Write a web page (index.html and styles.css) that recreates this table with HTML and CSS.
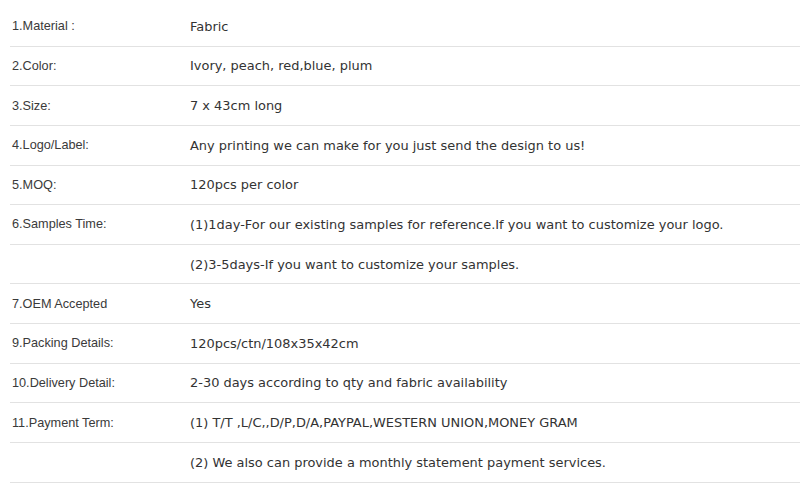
FILE: index.html
```html
<!DOCTYPE html>
<html>
<head>
<meta charset="utf-8">
<link rel="stylesheet" href="styles.css">
</head>
<body>
<div class="spec">
  <div class="row"><div class="label">1.Material :</div><div class="value">Fabric</div></div>
  <div class="row"><div class="label">2.Color:</div><div class="value">Ivory, peach, red,blue, plum</div></div>
  <div class="row"><div class="label">3.Size:</div><div class="value">7 x 43cm long</div></div>
  <div class="row"><div class="label">4.Logo/Label:</div><div class="value">Any printing we can make for you just send the design to us!</div></div>
  <div class="row"><div class="label">5.MOQ:</div><div class="value">120pcs per color</div></div>
  <div class="row"><div class="label">6.Samples Time:</div><div class="value">(1)1day-For our existing samples for reference.If you want to customize your logo.</div></div>
  <div class="row"><div class="label"></div><div class="value">(2)3-5days-If you want to customize your samples.</div></div>
  <div class="row"><div class="label">7.OEM Accepted</div><div class="value">Yes</div></div>
  <div class="row"><div class="label">9.Packing Details:</div><div class="value">120pcs/ctn/108x35x42cm</div></div>
  <div class="row"><div class="label">10.Delivery Detail:</div><div class="value">2-30 days according to qty and fabric availability</div></div>
  <div class="row"><div class="label">11.Payment Term:</div><div class="value">(1) T/T ,L/C,,D/P,D/A,PAYPAL,WESTERN UNION,MONEY GRAM</div></div>
  <div class="row"><div class="label"></div><div class="value">(2) We also can provide a monthly statement payment services.</div></div>
</div>
</body>
</html>
```
FILE: styles.css
```css
html, body {
  margin: 0;
  padding: 0;
  background: #ffffff;
}
.spec {
  padding: 7px 0 0 10px;
  display: flex;
  flex-direction: column;
}
.row {
  display: flex;
  align-items: center;
  height: 38.64px;
  border-bottom: 1px solid #e2e2e2;
}
.label {
  width: 178px;
  padding-left: 2px;
  font-family: "Liberation Sans", Arial, sans-serif;
  font-size: 12.7px;
  color: #3a3a3a;
}
.value {
  font-family: "DejaVu Sans", Verdana, sans-serif;
  font-size: 12.95px;
  color: #333333;
  white-space: nowrap;
}
```
